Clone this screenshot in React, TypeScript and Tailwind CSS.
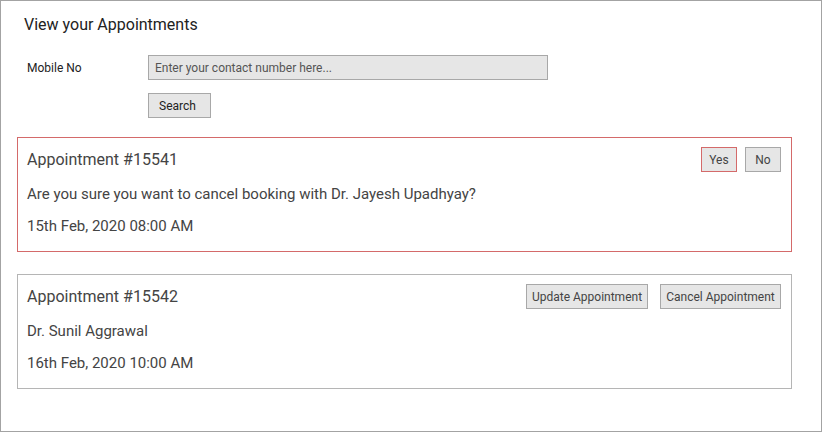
import React from 'react';
import clsx from 'clsx';

type Appointment = {
    id: string;
    doctor: string;
    when: string;
    confirming: boolean;
};

const appointments: Appointment[] = [
    {
        id: '15541',
        doctor: 'Dr. Jayesh Upadhyay',
        when: '15th Feb, 2020 08:00 AM',
        confirming: true,
    },
    {
        id: '15542',
        doctor: 'Dr. Sunil Aggrawal',
        when: '16th Feb, 2020 10:00 AM',
        confirming: false,
    },
];

const btn = 'h-[25px] border bg-[#e6e6e6] text-[12px] text-[#444]';

function AppointmentCard({ appt }: { appt: Appointment }) {
    return (
        <div
            className={clsx(
                'border border-solid pl-[9px] pr-[10px] pt-[9px] pb-[15px]',
                appt.confirming ? 'border-[#d46a6a]' : 'border-[#b5b5b5]'
            )}
        >
            {/* Header */}
            <div className="flex items-start justify-between">
                <h2 className="mt-[3px] text-[16px] leading-[20px] text-[#444]">Appointment #{appt.id}</h2>
                {appt.confirming ? (
                    <div className="flex gap-[8px]">
                        <button className={clsx(btn, 'w-[36px] border-[#d46a6a]')}>Yes</button>
                        <button className={clsx(btn, 'w-[36px] border-[#a8a8a8]')}>No</button>
                    </div>
                ) : (
                    <div className="flex gap-[12px]">
                        <button className={clsx(btn, 'w-[122px] border-[#a8a8a8]')}>Update Appointment</button>
                        <button className={clsx(btn, 'w-[121px] border-[#a8a8a8]')}>Cancel Appointment</button>
                    </div>
                )}
            </div>

            {/* Details */}
            <p className="mt-[12px] text-[15px] leading-[20px] text-[#444]">
                {appt.confirming ? `Are you sure you want to cancel booking with ${appt.doctor}?` : appt.doctor}
            </p>
            <p className="mt-[12px] text-[15px] leading-[20px] text-[#444]">{appt.when}</p>
        </div>
    );
}

export default function App() {
    return (
        <div
            className="h-[432px] w-[822px] border border-[#a3a3a3] bg-white pl-[16px] pr-[29px]"
            style={{ fontFamily: 'Roboto, "Liberation Sans", sans-serif' }}
        >
            <h1 className="ml-[7px] mt-[14px] text-[16px] leading-[20px] text-[#222]">View your Appointments</h1>

            {/* Search form */}
            <div className="mt-[20px] flex items-center">
                <label className="ml-[10px] w-[121px] text-[12px] leading-[16px] text-[#222]">Mobile No</label>
                <input
                    type="text"
                    placeholder="Enter your contact number here..."
                    className="h-[25px] w-[400px] border border-[#a8a8a8] bg-[#e6e6e6] px-[6px] text-[12px] text-[#444] placeholder:text-[#555] outline-none"
                />
            </div>
            <button className="ml-[131px] mt-[13px] h-[25px] w-[63px] border border-[#a8a8a8] bg-[#e6e6e6] pl-[10px] text-left text-[12px] text-[#222]">
                Search
            </button>

            {/* Appointment list */}
            <div className="mt-[19px] flex flex-col gap-[22px]">
                {appointments.map((a) => (
                    <AppointmentCard key={a.id} appt={a} />
                ))}
            </div>
        </div>
    );
}
